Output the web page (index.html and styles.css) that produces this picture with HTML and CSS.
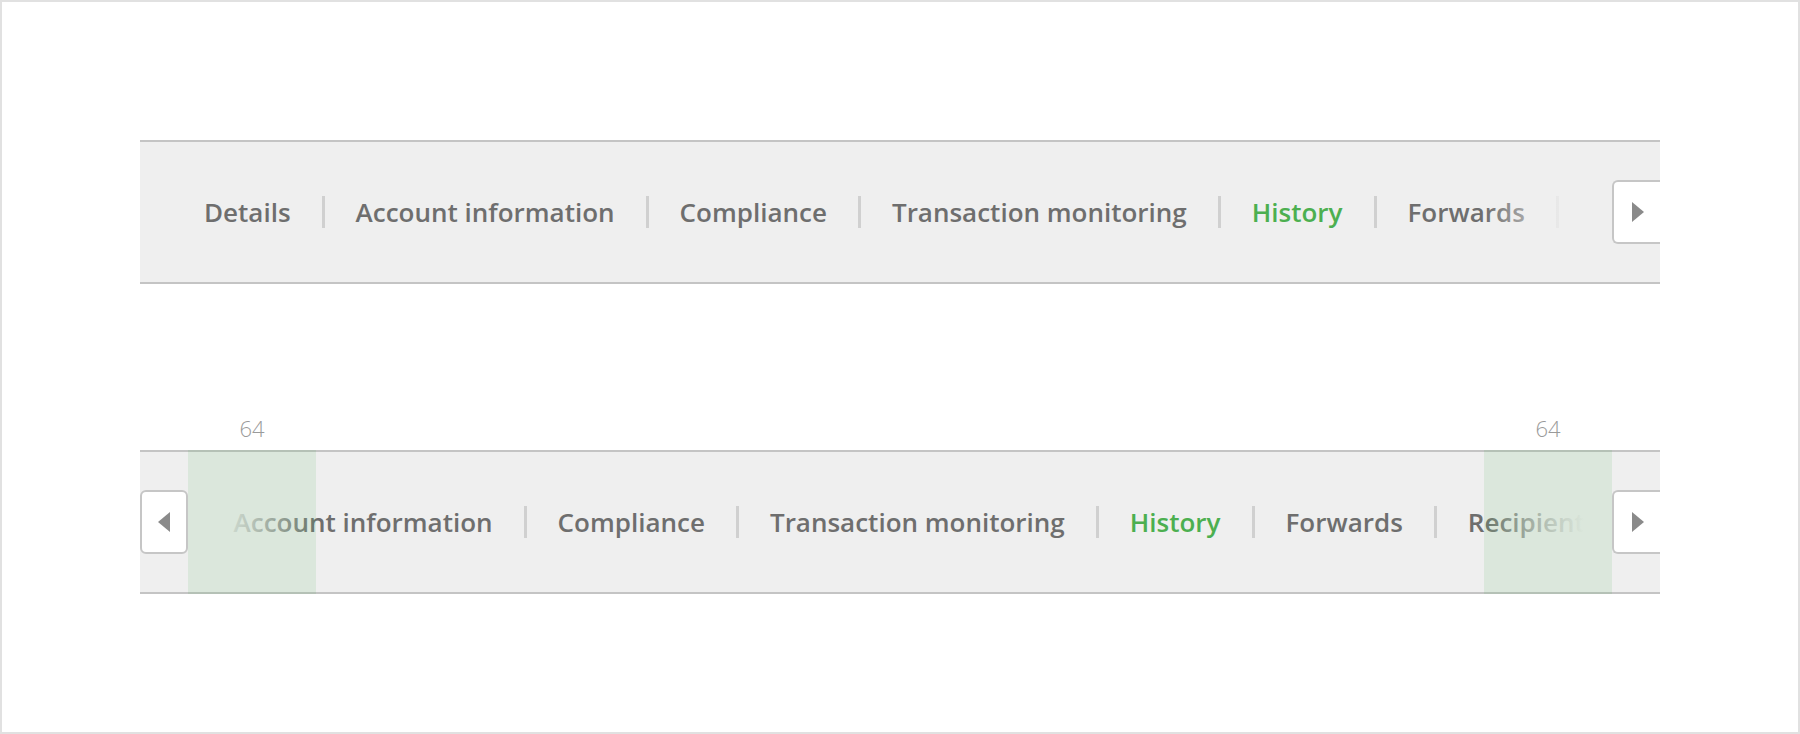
FILE: index.html
```html
<!DOCTYPE html>
<html lang="en">
<head>
<meta charset="utf-8">
<title>Scrollable tabs</title>
<link rel="stylesheet" href="styles.css">
</head>
<body>
<div class="page">
  <div class="tabbar">
    <div class="viewport">
      <div class="track">
        <span class="tab">Details</span><span class="sep"></span>
        <span class="tab">Account information</span><span class="sep"></span>
        <span class="tab">Compliance</span><span class="sep"></span>
        <span class="tab">Transaction monitoring</span><span class="sep"></span>
        <span class="tab tab-active">History</span><span class="sep"></span>
        <span class="tab">Forwards</span><span class="sep"></span>
        <span class="tab">Recipients</span><span class="sep"></span>
        <span class="tab">Documents</span>
      </div>
    </div>
    <div class="fade fade-right"></div>
    <button class="scroll-btn scroll-btn-right" aria-label="Scroll right">
      <svg width="12" height="20" viewBox="0 0 12 20"><polygon points="0,0 12,10 0,20" fill="#8a8a8a"/></svg>
    </button>
  </div>

  <div class="tabbar">
    <div class="viewport">
      <div class="track track-scrolled">
        <span class="tab">Details</span><span class="sep"></span>
        <span class="tab">Account information</span><span class="sep"></span>
        <span class="tab">Compliance</span><span class="sep"></span>
        <span class="tab">Transaction monitoring</span><span class="sep"></span>
        <span class="tab tab-active">History</span><span class="sep"></span>
        <span class="tab">Forwards</span><span class="sep"></span>
        <span class="tab">Recipients</span><span class="sep"></span>
        <span class="tab">Documents</span>
      </div>
    </div>
    <div class="fade fade-left"></div>
    <div class="fade fade-right"></div>
    <button class="scroll-btn scroll-btn-left" aria-label="Scroll left">
      <svg width="12" height="20" viewBox="0 0 12 20"><polygon points="12,0 0,10 12,20" fill="#8a8a8a"/></svg>
    </button>
    <button class="scroll-btn scroll-btn-right" aria-label="Scroll right">
      <svg width="12" height="20" viewBox="0 0 12 20"><polygon points="0,0 12,10 0,20" fill="#8a8a8a"/></svg>
    </button>
    <div class="spec spec-left"><span class="spec-label">64</span></div>
    <div class="spec spec-right"><span class="spec-label">64</span></div>
  </div>
</div>
</body>
</html>
```

FILE: styles.css
```css
* { box-sizing: border-box; }

html, body {
  margin: 0;
  padding: 0;
  background: #ffffff;
}

.page {
  width: 1800px;
  height: 734px;
  border: 2px solid #e1e1e1;
  padding: 138px 138px 0 138px;
  display: flex;
  flex-direction: column;
  gap: 166px;
  font-family: "Open Sans", "Liberation Sans", sans-serif;
}

.tabbar {
  position: relative;
  width: 1520px;
  height: 144px;
  background: #efefef;
  border-top: 2px solid #c4c4c4;
  border-bottom: 2px solid #c4c4c4;
}

.viewport {
  height: 140px;
  overflow: hidden;
}

.track {
  display: flex;
  align-items: center;
  height: 100%;
  padding-left: 64px;
}

.track-scrolled {
  transform: translateX(-122px);
}

.tab {
  flex-shrink: 0;
  white-space: nowrap;
  font-size: 26px;
  font-weight: 600;
  color: #6e6e6e;
  line-height: 1;
}

.tab-active {
  color: #4caf50;
}

.sep {
  flex-shrink: 0;
  width: 3px;
  height: 32px;
  margin: 0 31px;
  background: #d0d0d0;
}

.fade {
  position: absolute;
  top: 0;
  bottom: 0;
  width: 128px;
}

.fade-right {
  right: 48px;
  background: linear-gradient(to right, rgba(239, 239, 239, 0) 0%, rgba(239, 239, 239, 0.75) 55%, #efefef 78%, #efefef 100%);
}

.fade-left {
  left: 48px;
  background: linear-gradient(to left, rgba(239, 239, 239, 0) 0%, rgba(239, 239, 239, 0.75) 55%, #efefef 78%, #efefef 100%);
}

.scroll-btn {
  position: absolute;
  top: 38px;
  width: 48px;
  height: 64px;
  padding: 0;
  margin: 0;
  background: #ffffff;
  border: 2px solid #c6c6c6;
  display: flex;
  align-items: center;
  justify-content: center;
}

.scroll-btn-left {
  left: 0;
  border-radius: 6px;
}

.scroll-btn-right {
  right: 0;
  border-right: none;
  border-radius: 6px 0 0 6px;
  padding-left: 2px;
}

.spec {
  position: absolute;
  top: -2px;
  bottom: -2px;
  width: 128px;
  background: rgba(76, 175, 80, 0.12);
}

.spec-left { left: 48px; }
.spec-right { right: 48px; }

.spec-label {
  position: absolute;
  left: 0;
  right: 0;
  top: -33px;
  text-align: center;
  font-size: 22px;
  font-weight: 300;
  color: #9a9a9a;
  line-height: 1;
}
```
